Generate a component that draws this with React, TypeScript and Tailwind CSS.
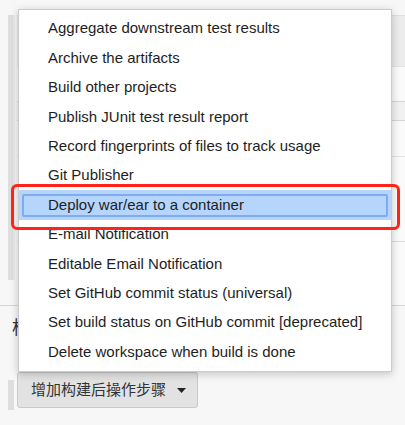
import { ReactNode } from 'react'

const items = [
  'Aggregate downstream test results',
  'Archive the artifacts',
  'Build other projects',
  'Publish JUnit test result report',
  'Record fingerprints of files to track usage',
  'Git Publisher',
  'Deploy war/ear to a container',
  'E-mail Notification',
  'Editable Email Notification',
  'Set GitHub commit status (universal)',
  'Set build status on GitHub commit [deprecated]',
  'Delete workspace when build is done',
]

function Row({ className, children }: { className: string; children?: ReactNode }) {
  return <div className={className}>{children}</div>
}

export default function App() {
  return (
    <div
      className="relative w-[405px] h-[425px] overflow-hidden bg-[#f7f7f7] text-[#1e1e1e]"
      style={{ fontFamily: '"Liberation Sans", Arial, "Noto Sans CJK SC", sans-serif' }}
    >
      {/* page behind the dropdown */}
      <div className="h-[306px] border-b border-[#d6d6d6] pt-[15px] flex">
        <div className="ml-[8px] w-[7px] h-[265px] bg-[#dedede] border-r-2 border-[#ebebeb]" />
        <div className="flex-1 ml-[2px] flex flex-col border-t border-[#e0e0e0]">
          <Row className="h-[50px] bg-[#ececec]" />
          <Row className="h-[35px] bg-[#fafafa] border-t border-[#e2e2e2]" />
          <Row className="h-[20px] bg-[#f1f1f1] border-y border-[#d4d4d4]" />
          <Row className="h-[35px] bg-[#fafafa]" />
          <Row className="h-[85px] bg-[#fafafa] border-t border-[#e4e4e4]" />
          <Row className="flex-1 bg-[#fafafa] border-t border-[#dcdcdc]" />
        </div>
      </div>
      <div className="pt-[10px] pl-[12px] h-[34px] text-[18px] text-[#333] leading-[24px]">构建后操作</div>
      <div className="mt-[32px] pl-[8px] flex items-start">
        <div className="mt-[8px] w-[6px] h-[30px] bg-[#dedede]" />
        <button className="ml-[3px] h-[36px] w-[181px] flex items-center pl-[13px] bg-[#e2e2e2] border border-[#c9c9c9] rounded-[3px] text-[15px] text-[#333]">
          <span>增加构建后操作步骤</span>
          <svg className="ml-[11px]" width="9" height="5" viewBox="0 0 9 5">
            <path d="M0 0H9L4.5 5Z" fill="#222" />
          </svg>
        </button>
      </div>

      {/* dropdown menu */}
      <div className="absolute left-[18px] top-[9px] w-[374px] bg-white border border-[#cccccc] shadow-[0_2px_8px_rgba(0,0,0,0.22)] py-[4px]">
        {items.map((item, i) => (
          <div
            key={item}
            className={`relative h-[29.4px] flex items-center pl-[29px] text-[15px] ${
              i === 6 ? 'bg-[#b5d5fd]' : ''
            }`}
          >
            {i === 6 && (
              <div className="absolute left-[3px] right-[3px] top-[4px] bottom-[3px] border-2 border-[#7eacf3] rounded-[2px]" />
            )}
            <span className="relative">{item}</span>
          </div>
        ))}
      </div>

      {/* red annotation */}
      <div className="absolute left-[11px] top-[184px] w-[389px] h-[46px] border-[3px] border-[#ff2418] rounded-[6px]" />
    </div>
  )
}
